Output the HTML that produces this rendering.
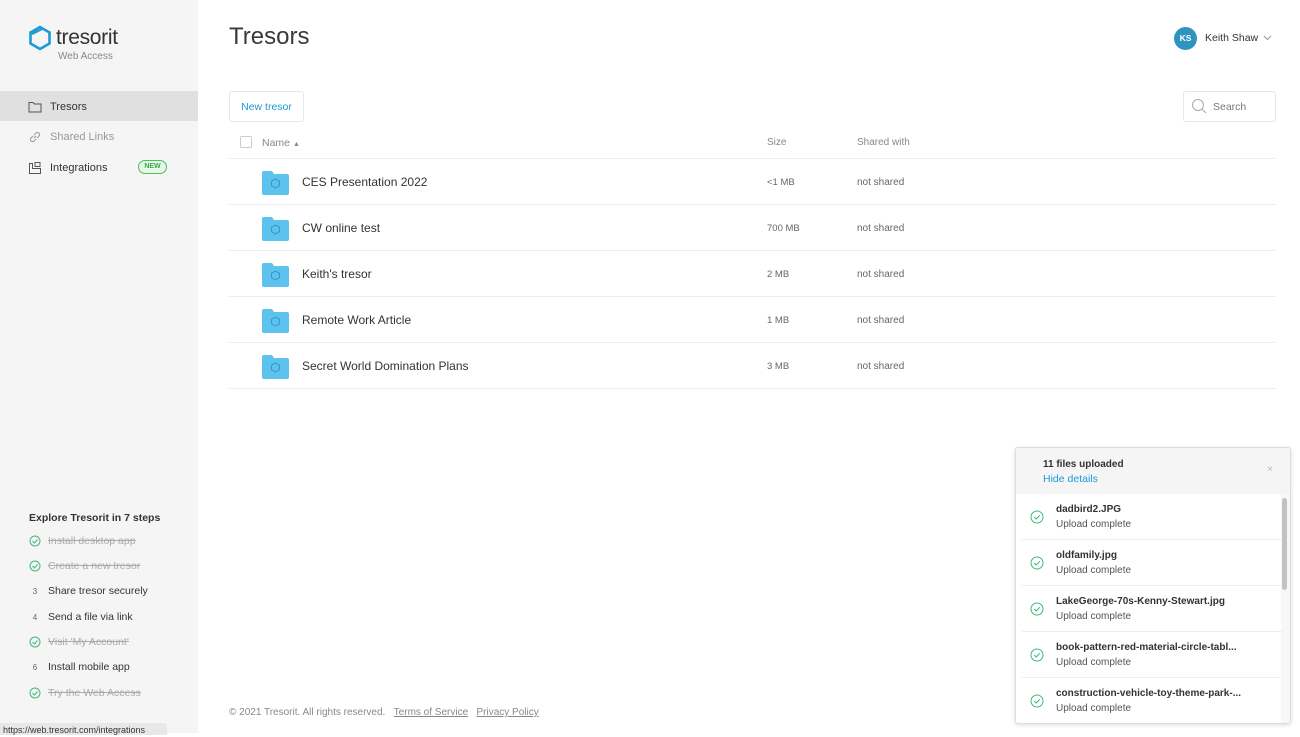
<!DOCTYPE html>
<html><head><meta charset="utf-8"><style>
*{box-sizing:border-box;margin:0;padding:0}
body{width:1300px;height:733px;overflow:hidden;font-family:"Liberation Sans",sans-serif;background:#fff;color:#333;position:relative}
.abs{position:absolute}
.side{left:0;top:0;width:198px;height:733px;background:#f5f5f5}
.nav{left:0;width:198px;height:30px;font-size:11px;display:flex;align-items:center;padding-left:28px;padding-top:1px}
.nav svg{margin-right:8px}
.step{left:29px;font-size:10.5px;display:flex;align-items:center;height:14px}
.step .ic{width:12px;margin-right:7px;display:flex;justify-content:center;font-size:8px;color:#666}
.done{color:#aaa;text-decoration:line-through}
.row{left:229px;width:1047px;height:46px;border-bottom:1px solid #ececec;display:flex;align-items:center}
.row .nm{position:absolute;left:73px;top:16px;font-size:12px;color:#333}
.row .sz{position:absolute;left:538px;top:18px;font-size:9.5px;color:#666}
.row .sh{position:absolute;left:628px;top:18px;font-size:10px;color:#666}
.fold{position:absolute;left:33px;top:12px}
.up{left:1015px;top:447px;width:276px;height:277px;border:1px solid #ddd;border-radius:3px;box-shadow:0 1px 4px rgba(0,0,0,.15);background:#fff;overflow:hidden}
.it{position:absolute;left:6px;width:260px;height:46px;border-bottom:1px solid #eee}
.it b{position:absolute;left:34px;top:10px;font-size:10px;color:#333}
.it span{position:absolute;left:34px;top:25px;font-size:10px;color:#555}
.it svg{position:absolute;left:8px;top:16px}
</style></head><body>
<div class="abs side"></div>
<svg class="abs" style="left:28px;top:25px" width="24" height="26" viewBox="0 0 24 26"><path d="M12 2 L21.5 7.5 V18.5 L12 24 L2.5 18.5 V7.5 Z" fill="none" stroke="#1e9ad6" stroke-width="2.6"/><path d="M4 9 L14 4" stroke="#1e9ad6" stroke-width="2.2"/></svg>
<div class="abs" style="left:56px;top:26px;font-size:21px;color:#333;letter-spacing:-.3px">tresorit</div>
<div class="abs" style="left:58px;top:51px;font-size:10px;color:#888">Web Access</div>
<div class="abs nav" style="top:91px;background:#e0e0e0;color:#333"><svg width="14" height="12" viewBox="0 0 14 12"><path d="M1 1.5h4l1.5 1.5H13v8H1z" fill="none" stroke="#555" stroke-width="1"/></svg>Tresors</div>
<div class="abs nav" style="top:121px;color:#999"><svg width="14" height="14" viewBox="0 0 14 14"><path d="M6 8l2-2M5 6L3 8a2 2 0 003 3l2-2M9 8l2-2a2 2 0 00-3-3L6 5" fill="none" stroke="#999" stroke-width="1"/></svg>Shared Links</div>
<div class="abs nav" style="top:152px;color:#333"><svg width="14" height="14" viewBox="0 0 14 14"><path d="M1.5 2.5h3v5h8v5h-11zM7 1.5h5v4H7z" fill="none" stroke="#555" stroke-width="1"/></svg>Integrations</div>
<div class="abs" style="left:138px;top:160px;width:29px;height:14px;border:1px solid #4cbf5a;border-radius:7px;background:#e5f7e5;color:#3aa84a;font-size:7px;font-weight:bold;text-align:center;line-height:12px">NEW</div>
<div class="abs" style="left:29px;top:512px;font-size:10.5px;font-weight:bold;color:#333">Explore Tresorit in 7 steps</div>
<svg width="0" height="0" style="position:absolute"><defs><g id="ck"><circle cx="6" cy="6" r="5" fill="none" stroke="#3cba7a" stroke-width="1"/><path d="M3.5 6l2 2 3-3.5" fill="none" stroke="#3cba7a" stroke-width="1"/></g></defs></svg>
<div class="abs step" style="top:534px"><span class="ic"><svg width="12" height="12"><use href="#ck"/></svg></span><span class="done">Install desktop app</span></div>
<div class="abs step" style="top:559px"><span class="ic"><svg width="12" height="12"><use href="#ck"/></svg></span><span class="done">Create a new tresor</span></div>
<div class="abs step" style="top:584px"><span class="ic">3</span>Share tresor securely</div>
<div class="abs step" style="top:610px"><span class="ic">4</span>Send a file via link</div>
<div class="abs step" style="top:635px"><span class="ic"><svg width="12" height="12"><use href="#ck"/></svg></span><span class="done">Visit 'My Account'</span></div>
<div class="abs step" style="top:660px"><span class="ic">6</span>Install mobile app</div>
<div class="abs step" style="top:686px"><span class="ic"><svg width="12" height="12"><use href="#ck"/></svg></span><span class="done">Try the Web Access</span></div>
<div class="abs" style="left:0;top:723px;width:167px;height:12px;background:#e8e8e8;border-radius:0 4px 0 0;font-size:9px;color:#333;padding-left:3px;line-height:14px">https://web.tresorit.com/integrations</div>

<div class="abs" style="left:229px;top:23px;font-size:24px;color:#3a3a3a">Tresors</div>
<div class="abs" style="left:1174px;top:27px;width:23px;height:23px;border-radius:50%;background:#2d93c0;color:#fff;font-size:8.5px;font-weight:bold;text-align:center;line-height:23px">KS</div>
<div class="abs" style="left:1205px;top:32px;font-size:10.5px;color:#333">Keith Shaw</div>
<svg class="abs" style="left:1263px;top:35px" width="9" height="6"><path d="M1 1l3.5 3.5L8 1" fill="none" stroke="#999"/></svg>
<div class="abs" style="left:229px;top:91px;width:75px;height:31px;border:1px solid #e6e6e6;border-radius:3px;font-size:10.5px;color:#1e9ad6;text-align:center;line-height:31px">New tresor</div>
<div class="abs" style="left:1183px;top:91px;width:93px;height:31px;border:1px solid #e6e6e6;border-radius:3px"></div>
<svg class="abs" style="left:1191px;top:98px" width="16" height="16"><circle cx="7" cy="7" r="5.5" fill="none" stroke="#aaa"/><path d="M11 11l4 4" stroke="#aaa"/></svg>
<div class="abs" style="left:1213px;top:101px;font-size:10.5px;color:#777">Search</div>

<div class="abs" style="left:240px;top:136px;width:12px;height:12px;border:1px solid #ccc;border-radius:2px"></div>
<div class="abs" style="left:262px;top:137px;font-size:10.5px;color:#888">Name <span style="font-size:7px">▲</span></div>
<div class="abs" style="left:767px;top:137px;font-size:10px;color:#888">Size</div>
<div class="abs" style="left:857px;top:137px;font-size:10px;color:#888">Shared with</div>
<div class="abs" style="left:229px;top:158px;width:1047px;border-top:1px solid #ececec"></div>

<svg width="0" height="0" style="position:absolute"><defs><g id="fd"><path d="M0 2a2 2 0 012-2h8l2 3h13a2 2 0 012 2v17a2 2 0 01-2 2H2a2 2 0 01-2-2z" fill="#5ec2ef"/><path d="M13.5 8l4 2.3v4.4l-4 2.3-4-2.3v-4.4z" fill="none" stroke="#2e97c8" stroke-width=".9"/></g></defs></svg>
<div class="abs row" style="top:159px"><svg class="fold" width="27" height="24"><use href="#fd"/></svg><span class="nm">CES Presentation 2022</span><span class="sz">&lt;1 MB</span><span class="sh">not shared</span></div>
<div class="abs row" style="top:205px"><svg class="fold" width="27" height="24"><use href="#fd"/></svg><span class="nm">CW online test</span><span class="sz">700 MB</span><span class="sh">not shared</span></div>
<div class="abs row" style="top:251px"><svg class="fold" width="27" height="24"><use href="#fd"/></svg><span class="nm">Keith's tresor</span><span class="sz">2 MB</span><span class="sh">not shared</span></div>
<div class="abs row" style="top:297px"><svg class="fold" width="27" height="24"><use href="#fd"/></svg><span class="nm">Remote Work Article</span><span class="sz">1 MB</span><span class="sh">not shared</span></div>
<div class="abs row" style="top:343px"><svg class="fold" width="27" height="24"><use href="#fd"/></svg><span class="nm">Secret World Domination Plans</span><span class="sz">3 MB</span><span class="sh">not shared</span></div>

<div class="abs" style="left:229px;top:707px;font-size:10px;color:#888">© 2021 Tresorit. All rights reserved. &nbsp;&nbsp;<u>Terms of Service</u> &nbsp;&nbsp;<u>Privacy Policy</u></div>

<div class="abs up">
<div style="position:absolute;left:0;top:0;width:276px;height:46px;background:#f5f5f5"></div>
<div style="position:absolute;left:27px;top:11px;font-size:10px;font-weight:bold;color:#333">11 files uploaded</div>
<div style="position:absolute;left:27px;top:25px;font-size:10.5px;color:#1e9ad6">Hide details</div>
<div style="position:absolute;left:251px;top:16px;font-size:10px;color:#bbb">×</div>
<div style="position:absolute;left:265px;top:46px;width:11px;height:231px;background:#f7f7f7"></div>
<div style="position:absolute;left:266px;top:50px;width:5px;height:92px;background:#c2c2c2;border-radius:3px"></div>
<div class="it" style="top:46px"><svg width="14" height="14"><circle cx="7" cy="7" r="6" fill="none" stroke="#3cba7a"/><path d="M4.2 7l2 2 3.6-3.8" fill="none" stroke="#3cba7a"/></svg><b>dadbird2.JPG</b><span>Upload complete</span></div>
<div class="it" style="top:92px"><svg width="14" height="14"><circle cx="7" cy="7" r="6" fill="none" stroke="#3cba7a"/><path d="M4.2 7l2 2 3.6-3.8" fill="none" stroke="#3cba7a"/></svg><b>oldfamily.jpg</b><span>Upload complete</span></div>
<div class="it" style="top:138px"><svg width="14" height="14"><circle cx="7" cy="7" r="6" fill="none" stroke="#3cba7a"/><path d="M4.2 7l2 2 3.6-3.8" fill="none" stroke="#3cba7a"/></svg><b>LakeGeorge-70s-Kenny-Stewart.jpg</b><span>Upload complete</span></div>
<div class="it" style="top:184px"><svg width="14" height="14"><circle cx="7" cy="7" r="6" fill="none" stroke="#3cba7a"/><path d="M4.2 7l2 2 3.6-3.8" fill="none" stroke="#3cba7a"/></svg><b>book-pattern-red-material-circle-tabl...</b><span>Upload complete</span></div>
<div class="it" style="top:230px;border:none"><svg width="14" height="14"><circle cx="7" cy="7" r="6" fill="none" stroke="#3cba7a"/><path d="M4.2 7l2 2 3.6-3.8" fill="none" stroke="#3cba7a"/></svg><b>construction-vehicle-toy-theme-park-...</b><span>Upload complete</span></div>
</div>
</body></html>
